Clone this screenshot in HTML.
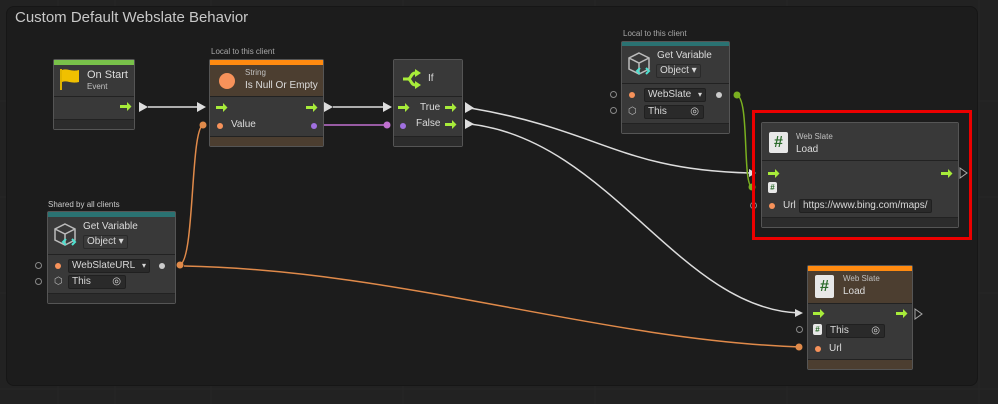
<!DOCTYPE html>
<html><head><meta charset="utf-8"><style>
*{margin:0;padding:0;box-sizing:border-box}
body{width:998px;height:404px;background:#222;overflow:hidden;position:relative;font-family:"Liberation Sans",sans-serif;color:#d2d2d2}
.grp{position:absolute;left:6px;top:6px;width:972px;height:380px;background:#1c1c1c;border-radius:8px;border:1px solid #161616}
.gt{position:absolute;left:8px;top:2px;font-size:15px;color:#c8c8c8}
.n{position:absolute;background:#393939;border:1px solid #555;border-radius:2px}
.hd{position:absolute;left:0;right:0;top:0;border-bottom:1px solid #222}
.ft{position:absolute;left:0;right:0;bottom:0;height:10px;background:#2c2c2c;border-top:1px solid #222}
.lbl{position:absolute;font-size:8px;color:#a8a8a8}
.t{position:absolute;font-size:11px;color:#dcdcdc;white-space:nowrap}
.s{position:absolute;font-size:8px;color:#c0c0c0;white-space:nowrap}
.fld{position:absolute;background:#2a2a2a;border:1px solid #202020;border-radius:2px;font-size:10px;color:#d8d8d8;padding-left:3px;line-height:12px;height:14px;white-space:nowrap}
.dot{position:absolute;width:6px;height:6px;border-radius:50%}
.ring{position:absolute;width:7px;height:7px;border-radius:50%;border:1px solid #888}
.doc{position:absolute;background:#e8e8e8;border-radius:2px;color:#2a6a2a;font-weight:bold;text-align:center}
</style></head><body>
<svg width="998" height="404" style="position:absolute;left:0;top:0">
<g stroke="#262626" stroke-width="1">
<line x1="58" y1="0" x2="58" y2="404"/><line x1="115" y1="0" x2="115" y2="404"/><line x1="211" y1="0" x2="211" y2="404"/><line x1="403" y1="0" x2="403" y2="404"/><line x1="595" y1="0" x2="595" y2="404"/><line x1="787" y1="0" x2="787" y2="404"/><line x1="979" y1="0" x2="979" y2="404"/>
<line x1="0" y1="101" x2="998" y2="101"/><line x1="0" y1="197" x2="998" y2="197"/><line x1="0" y1="293" x2="998" y2="293"/><line x1="0" y1="389" x2="998" y2="389"/>
</g></svg>
<div class="grp"><div class="gt">Custom Default Webslate Behavior</div></div>
<svg width="998" height="404" style="position:absolute;left:0;top:0;z-index:1">
<g fill="none" stroke-width="1.5">
<path d="M148 107 H197" stroke="#ddd"/>
<path d="M333 107 H383" stroke="#ddd"/>
<path d="M317 125 H387" stroke="#c070d0"/>
<path d="M470 108 C600 130 620 170 750 173" stroke="#ddd"/>
<path d="M470 124 C610 140 680 310 800 313" stroke="#ddd"/>
<path d="M179 265 C195 265 190 130 203 125" stroke="#e08a4a"/>
<path d="M184 266 C400 270 600 340 800 347" stroke="#e08a4a"/>
<path d="M736 95 C750 95 742 185 752 187" stroke="#7ab020"/>
</g>
<g fill="#ddd"><path d="M139 102 L148 107 L139 112Z"/><path d="M197 102 L206 107 L197 112Z"/><path d="M324 102 L333 107 L324 112Z"/><path d="M383 102 L392 107 L383 112Z"/><path d="M465 102 L474 108 L465 113Z"/><path d="M465 119 L474 124 L465 129Z"/><path d="M749 169 L756 173 L749 177Z"/><path d="M795 309 L803 313 L795 317Z"/></g>
<g fill="none" stroke="#aaa"><path d="M960 168 L967 173 L960 178Z"/><path d="M915 309 L922 314 L915 319Z"/></g>
<circle cx="203" cy="125" r="3.5" fill="#e08a4a"/><circle cx="387" cy="125" r="3.5" fill="#c070d0"/><circle cx="317" cy="125" r="3.5" fill="#c070d0"/>
<circle cx="180" cy="265" r="3.5" fill="#e08a4a"/><circle cx="799" cy="347" r="3.5" fill="#e08a4a"/>
<circle cx="737" cy="95" r="3.5" fill="#7ab020"/><circle cx="752" cy="187" r="3.5" fill="#7ab020"/>
</svg>

<!-- On Start -->
<div class="n" style="left:53px;top:59px;width:82px;height:71px;z-index:2">
<div style="position:absolute;left:0;right:0;top:0;height:5px;background:#79c24a"></div>
<div class="hd" style="top:5px;height:32px;background:#393939"></div>
<svg style="position:absolute;left:5px;top:7px" width="22" height="24"><path d="M2 2 V23" stroke="#e0b400" stroke-width="2"/><path d="M3 3 C8 1 12 5 20 3 V15 C12 17 8 13 3 15Z" fill="#f0c000"/></svg>
<div class="t" style="left:33px;top:9px">On Start</div><div class="s" style="left:33px;top:22px">Event</div>
<svg style="position:absolute;left:66px;top:42px" width="12" height="9"><path d="M0 3h7V0l4.5 4.5L7 9V6H0z" fill="#a8ec3a"/></svg>
<div class="ft"></div></div>

<!-- Is Null -->
<div class="lbl" style="left:211px;top:47px">Local to this client</div>
<div class="n" style="left:209px;top:59px;width:115px;height:88px;z-index:2">
<div style="position:absolute;left:0;right:0;top:0;height:5px;background:#ff8a10"></div>
<div class="hd" style="top:5px;height:32px;background:#4c3e30"></div>
<div style="position:absolute;left:9px;top:13px;width:16px;height:16px;border-radius:50%;background:#f7925a"></div>
<div class="s" style="left:35px;top:8px">String</div><div class="t" style="left:35px;top:20px;font-size:10px">Is Null Or Empty</div>
<svg style="position:absolute;left:6px;top:43px" width="12" height="9"><path d="M0 3h7V0l4.5 4.5L7 9V6H0z" fill="#a8ec3a"/></svg>
<svg style="position:absolute;left:96px;top:43px" width="12" height="9"><path d="M0 3h7V0l4.5 4.5L7 9V6H0z" fill="#a8ec3a"/></svg>
<div class="dot" style="left:7px;top:63px;background:#f7925a"></div><div class="t" style="left:21px;top:59px;font-size:10px">Value</div>
<div class="dot" style="left:101px;top:63px;background:#a070e0"></div>
<div class="ft" style="background:#4c3e30"></div></div>

<!-- If -->
<div class="n" style="left:393px;top:59px;width:70px;height:88px;z-index:2">
<div class="hd" style="height:37px;background:#393939"></div>
<svg style="position:absolute;left:6px;top:8px" width="22" height="22"><path d="M3 11 H8 C11 11 11 5 15 5 H18 M8 11 C11 11 11 17 15 17 H18" stroke="#a8ec3a" stroke-width="3" fill="none"/><path d="M15 1 L21 5 L15 9Z M15 13 L21 17 L15 21Z" fill="#a8ec3a"/></svg>
<div class="t" style="left:34px;top:13px;font-size:10px">If</div>
<svg style="position:absolute;left:4px;top:43px" width="12" height="9"><path d="M0 3h7V0l4.5 4.5L7 9V6H0z" fill="#a8ec3a"/></svg>
<div class="t" style="left:26px;top:42px;font-size:10px">True</div>
<svg style="position:absolute;left:51px;top:43px" width="12" height="9"><path d="M0 3h7V0l4.5 4.5L7 9V6H0z" fill="#a8ec3a"/></svg>
<div class="dot" style="left:6px;top:63px;background:#a070e0"></div><div class="t" style="left:22px;top:58px;font-size:10px">False</div>
<svg style="position:absolute;left:51px;top:60px" width="12" height="9"><path d="M0 3h7V0l4.5 4.5L7 9V6H0z" fill="#a8ec3a"/></svg>
<div class="ft"></div></div>

<!-- Get Variable top -->
<div class="lbl" style="left:623px;top:29px">Local to this client</div>
<div class="n" style="left:621px;top:41px;width:109px;height:93px;z-index:2">
<div style="position:absolute;left:0;right:0;top:0;height:4px;background:#2a7272"></div>
<div class="hd" style="top:4px;height:38px;background:#393939"></div>
<svg style="position:absolute;left:5px;top:9px" width="26" height="26"><path d="M12 2 L22 7 V18 L12 23 L2 18 V7Z M2 7 L12 12 L22 7 M12 12 V23" stroke="#bbb" stroke-width="1.5" fill="none"/><path d="M13 17 l-3 3 3 3 M19 17 l3 3 -3 3" stroke="#4fe0d0" stroke-width="2" fill="none"/></svg>
<div class="t" style="left:35px;top:8px;font-size:10px">Get Variable</div>
<div class="fld" style="left:34px;top:22px;width:45px;background:#3a3a3a;border-color:#2a2a2a">Object ▾</div>
<div class="dot" style="left:7px;top:50px;background:#f7925a"></div>
<div class="fld" style="left:22px;top:46px;width:62px">WebSlate <span style="position:absolute;right:3px;font-size:8px">▾</span></div>
<div class="dot" style="left:94px;top:50px;background:#ccc"></div>
<div style="position:absolute;left:6px;top:64px;font-size:10px;color:#bbb">⬡</div>
<div class="fld" style="left:22px;top:63px;width:60px">This<span style="position:absolute;right:4px">◎</span></div>
<div class="ft"></div></div>
<div class="ring" style="left:610px;top:91px"></div><div class="ring" style="left:610px;top:107px"></div>

<!-- Web Slate Load red -->
<div style="position:absolute;left:752px;top:110px;width:220px;height:130px;border:3px solid #ec0000;z-index:3"></div>
<div class="n" style="left:761px;top:122px;width:198px;height:106px;z-index:2">
<div class="hd" style="height:38px;background:#393939"></div>
<div class="doc" style="left:7px;top:9px;width:19px;height:21px;font-size:16px;line-height:21px">#</div>
<div class="s" style="left:34px;top:9px">Web Slate</div><div class="t" style="left:34px;top:21px;font-size:10px">Load</div>
<svg style="position:absolute;left:6px;top:46px" width="12" height="9"><path d="M0 3h7V0l4.5 4.5L7 9V6H0z" fill="#a8ec3a"/></svg>
<svg style="position:absolute;left:179px;top:46px" width="12" height="9"><path d="M0 3h7V0l4.5 4.5L7 9V6H0z" fill="#a8ec3a"/></svg>
<div class="doc" style="left:6px;top:59px;width:9px;height:11px;font-size:8px;line-height:11px">#</div>
<div class="dot" style="left:7px;top:80px;background:#f7925a"></div>
<div class="t" style="left:21px;top:77px;font-size:10px">Url</div>
<div class="fld" style="left:37px;top:76px;width:133px">https://www.bing.com/maps/</div>
<div class="ft"></div></div>
<div class="ring" style="left:750px;top:202px;z-index:2"></div>

<!-- Get Variable left -->
<div class="lbl" style="left:48px;top:200px;color:#ccc">Shared by all clients</div>
<div class="n" style="left:47px;top:211px;width:129px;height:93px;z-index:2">
<div style="position:absolute;left:0;right:0;top:0;height:5px;background:#2a7272"></div>
<div class="hd" style="top:5px;height:38px;background:#393939"></div>
<svg style="position:absolute;left:5px;top:10px" width="26" height="26"><path d="M12 2 L22 7 V18 L12 23 L2 18 V7Z M2 7 L12 12 L22 7 M12 12 V23" stroke="#bbb" stroke-width="1.5" fill="none"/><path d="M13 17 l-3 3 3 3 M19 17 l3 3 -3 3" stroke="#4fe0d0" stroke-width="2" fill="none"/></svg>
<div class="t" style="left:35px;top:9px;font-size:10px">Get Variable</div>
<div class="fld" style="left:35px;top:23px;width:45px;background:#3a3a3a;border-color:#2a2a2a">Object ▾</div>
<div class="dot" style="left:7px;top:51px;background:#f7925a"></div>
<div class="fld" style="left:20px;top:47px;width:82px">WebSlateURL <span style="position:absolute;right:3px;font-size:8px">▾</span></div>
<div class="dot" style="left:111px;top:51px;background:#ccc"></div>
<div style="position:absolute;left:6px;top:64px;font-size:10px;color:#bbb">⬡</div>
<div class="fld" style="left:20px;top:63px;width:58px">This<span style="position:absolute;right:4px">◎</span></div>
<div class="ft"></div></div>
<div class="ring" style="left:35px;top:262px"></div><div class="ring" style="left:35px;top:278px"></div>

<!-- Bottom load -->
<div class="n" style="left:807px;top:265px;width:106px;height:105px;z-index:2">
<div style="position:absolute;left:0;right:0;top:0;height:5px;background:#ff8a10"></div>
<div class="hd" style="top:5px;height:33px;background:#4c3e30"></div>
<div class="doc" style="left:7px;top:9px;width:19px;height:23px;font-size:16px;line-height:23px">#</div>
<div class="s" style="left:35px;top:8px">Web Slate</div><div class="t" style="left:35px;top:20px;font-size:10px">Load</div>
<svg style="position:absolute;left:5px;top:43px" width="12" height="9"><path d="M0 3h7V0l4.5 4.5L7 9V6H0z" fill="#a8ec3a"/></svg>
<svg style="position:absolute;left:88px;top:43px" width="12" height="9"><path d="M0 3h7V0l4.5 4.5L7 9V6H0z" fill="#a8ec3a"/></svg>
<div class="doc" style="left:5px;top:58px;width:9px;height:11px;font-size:8px;line-height:11px">#</div>
<div class="fld" style="left:18px;top:58px;width:59px">This<span style="position:absolute;right:4px">◎</span></div>
<div class="dot" style="left:7px;top:80px;background:#f7925a"></div>
<div class="t" style="left:21px;top:77px;font-size:10px">Url</div>
<div class="ft" style="background:#4c3e30"></div></div>
<div class="ring" style="left:796px;top:326px;z-index:2"></div>
</body></html>
